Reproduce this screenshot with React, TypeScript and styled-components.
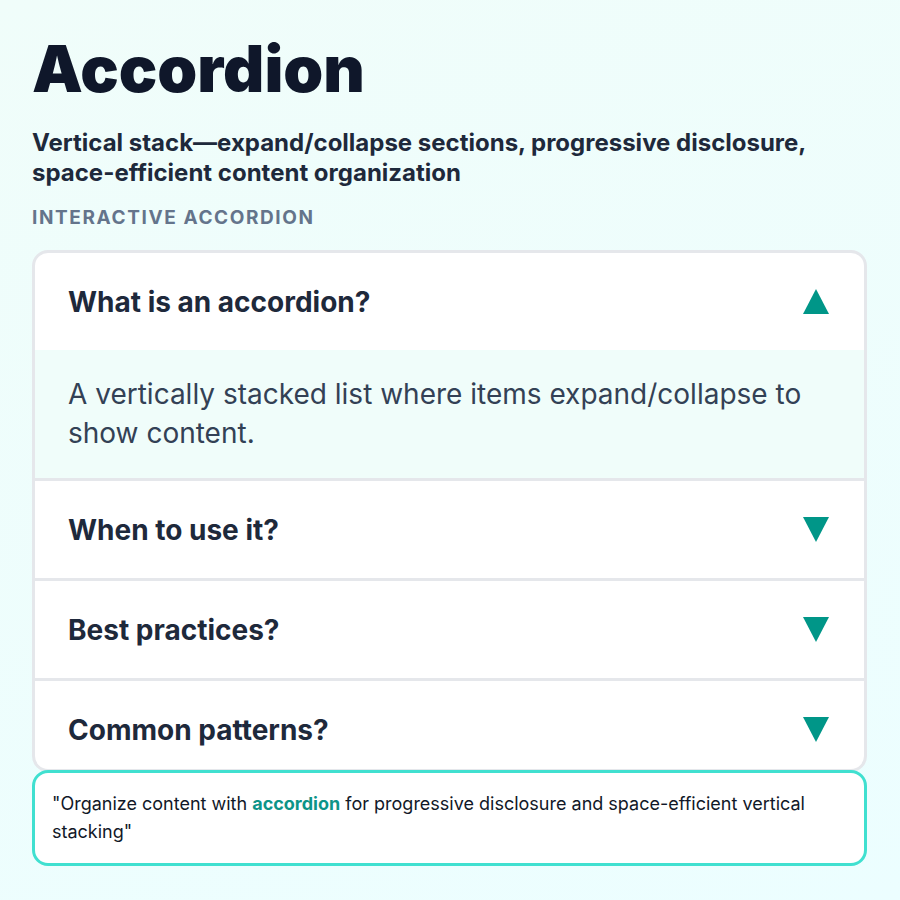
import React, { useState } from "react";
import styled, { createGlobalStyle } from "styled-components";

const Global = createGlobalStyle`
  html, body { margin: 0; padding: 0; }
  body {
    font-family: Inter, "Noto Sans", "Liberation Sans", sans-serif;
    background: linear-gradient(160deg, #f0fdfa 0%, #ecfeff 100%);
    min-height: 900px;
  }
  * { box-sizing: border-box; }
`;

const Page = styled.div`
  width: 900px;
  height: 900px;
  padding: 34px 33px 0 32px;
  display: flex;
  flex-direction: column;
`;

const Title = styled.h1`
  margin: 0;
  font-size: 64px;
  line-height: 70px;
  font-weight: 900;
  color: #0f172a;
`;

const Subtitle = styled.p`
  margin: 24px 0 0;
  font-size: 24px;
  line-height: 30px;
  font-weight: 700;
  color: #1e293b;
`;

const SectionLabel = styled.div`
  margin-top: 18px;
  font-size: 19px;
  line-height: 24px;
  font-weight: 700;
  letter-spacing: 1.6px;
  color: #64748b;
  text-transform: uppercase;
`;

const Card = styled.div`
  margin-top: 20px;
  height: 522px;
  background: #ffffff;
  border: 3px solid #e5e7eb;
  border-radius: 16px;
  overflow: hidden;
  display: flex;
  flex-direction: column;
`;

const Item = styled.div`
  border-bottom: 3px solid #e5e7eb;
  flex-shrink: 0;
`;

const Header = styled.button`
  all: unset;
  box-sizing: border-box;
  width: 100%;
  height: 97px;
  padding: 0 35px 0 33px;
  display: flex;
  align-items: center;
  justify-content: space-between;
  cursor: pointer;
  font-family: Inter, "Noto Sans", "Liberation Sans", sans-serif;
  font-size: 28px;
  font-weight: 700;
  color: #1e293b;
`;

const Panel = styled.div`
  background: #f0fdfa;
  padding: 25px 33px;
  font-size: 28px;
  line-height: 39px;
  color: #334155;
  height: 128px;
`;

const Arrow = styled.svg<{ $up: boolean }>`
  width: 26px;
  height: 25px;
  flex-shrink: 0;
  transform: ${(p) => (p.$up ? "none" : "rotate(180deg)")};
`;

const Callout = styled.div`
  position: relative;
  margin-top: -2px;
  background: #ffffff;
  border: 3px solid #40e0d0;
  border-radius: 16px;
  padding: 17px 17px;
  font-size: 18px;
  line-height: 28px;
  color: #111827;
`;

const Highlight = styled.strong`
  color: #0d9488;
  font-weight: 700;
`;

const items = [
  {
    q: "What is an accordion?",
    a: "A vertically stacked list where items expand/collapse to show content.",
  },
  { q: "When to use it?", a: "When you need to organize lots of content in limited vertical space." },
  { q: "Best practices?", a: "Keep headers short and clear; allow one or many open sections." },
  { q: "Common patterns?", a: "FAQs, settings panels, navigation menus and filters." },
];

export default function App() {
  const [open, setOpen] = useState<number | null>(0);
  return (
    <>
      <Global />
      <Page>
        <Title>Accordion</Title>
        <Subtitle>
          Vertical stack—expand/collapse sections, progressive disclosure, space-efficient content organization
        </Subtitle>
        <SectionLabel>Interactive Accordion</SectionLabel>
        <Card>
          {items.map((it, i) => (
            <Item key={it.q}>
              <Header onClick={() => setOpen(open === i ? null : i)}>
                <span>{it.q}</span>
                <Arrow $up={open === i} viewBox="0 0 26 25">
                  <polygon points="13,0 26,25 0,25" fill="#009688" />
                </Arrow>
              </Header>
              {open === i && <Panel>{it.a}</Panel>}
            </Item>
          ))}
        </Card>
        <Callout>
          "Organize content with <Highlight>accordion</Highlight> for progressive disclosure and space-efficient
          vertical stacking"
        </Callout>
      </Page>
    </>
  );
}
